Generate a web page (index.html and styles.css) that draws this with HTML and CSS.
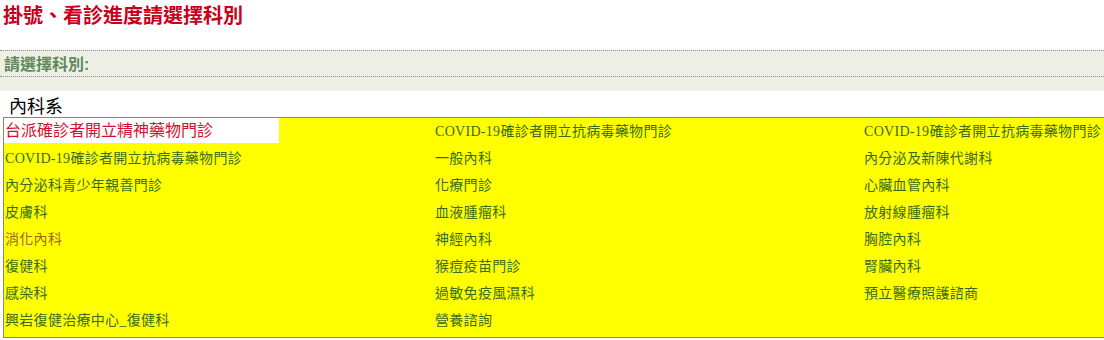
FILE: index.html
```html
<!DOCTYPE html>
<html lang="zh-Hant">
<head>
<meta charset="utf-8">
<title>掛號、看診進度請選擇科別</title>
<link rel="stylesheet" href="styles.css">
</head>
<body>
<h1 class="title">掛號、看診進度請選擇科別</h1>
<div class="band">
  <div class="band-label">請選擇科別:</div>
  <div class="band-rule"></div>
</div>
<div class="group">內科系</div>
<div class="dept-table">
  <div class="cell selected">台派確診者開立精神藥物門診</div>
  <div class="cell"><span class="latin">COVID-19</span>確診者開立抗病毒藥物門診</div>
  <div class="cell"><span class="latin">COVID-19</span>確診者開立抗病毒藥物門診</div>
  <div class="cell"><span class="latin">COVID-19</span>確診者開立抗病毒藥物門診</div>
  <div class="cell">一般內科</div>
  <div class="cell">內分泌及新陳代謝科</div>
  <div class="cell">內分泌科青少年親善門診</div>
  <div class="cell">化療門診</div>
  <div class="cell">心臟血管內科</div>
  <div class="cell">皮膚科</div>
  <div class="cell">血液腫瘤科</div>
  <div class="cell">放射線腫瘤科</div>
  <div class="cell visited">消化內科</div>
  <div class="cell">神經內科</div>
  <div class="cell">胸腔內科</div>
  <div class="cell">復健科</div>
  <div class="cell">猴痘疫苗門診</div>
  <div class="cell">腎臟內科</div>
  <div class="cell">感染科</div>
  <div class="cell">過敏免疫風濕科</div>
  <div class="cell">預立醫療照護諮商</div>
  <div class="cell">興岩復健治療中心_復健科</div>
  <div class="cell">營養諮詢</div>
  <div class="cell"></div>
</div>
</body>
</html>
```
FILE: styles.css
```css
html, body {
  margin: 0;
  padding: 0;
  background: #ffffff;
}
body {
  font-family: "Liberation Sans", "Noto Sans CJK TC", sans-serif;
  width: 1104px;
  overflow: hidden;
}
.title {
  margin: 0;
  padding: 5px 0 0 3px;
  height: 50px;
  box-sizing: border-box;
  font-size: 20px;
  line-height: 22px;
  font-weight: bold;
  color: #c8001a;
}
.band {
  background: #eef0e6;
  border-top: 1px dotted #8a8a8a;
  height: 41px;
  box-sizing: border-box;
}
.band-label {
  padding: 4px 0 0 4px;
  height: 24px;
  box-sizing: border-box;
  font-size: 16px;
  line-height: 19px;
  font-weight: bold;
  color: #5f8a5a;
}
.band-rule {
  border-top: 1px dotted #8a8a8a;
  margin-top: 1px;
}
.group {
  padding: 5px 0 0 9px;
  height: 26px;
  box-sizing: border-box;
  font-size: 18px;
  line-height: 22px;
  color: #000000;
}
.dept-table {
  margin-left: 3px;
  width: 1101px;
  box-sizing: border-box;
  border: 1px solid #8a8a5a;
  border-right: none;
  background: #ffff00;
  display: grid;
  grid-template-columns: 430px 429px 1fr;
  grid-auto-rows: 27px;
  padding-bottom: 3px;
}
.cell {
  padding-left: 1px;
  font-family: "Liberation Serif", "Noto Sans CJK TC", serif;
  font-size: 14px;
  line-height: 28px;
  color: #3a6b1c;
  white-space: nowrap;
  letter-spacing: 0.3px;
}
.cell.selected {
  background: #ffffff;
  color: #d0102e;
  font-family: "Liberation Sans", "Noto Sans CJK TC", sans-serif;
  font-size: 16px;
  line-height: 26px;
  height: 25px;
  width: 274px;
  letter-spacing: 0;
}
.cell.visited {
  color: #a0661a;
}
.latin {
  font-family: "Liberation Serif", serif;
  font-size: 14px;
  letter-spacing: 0.3px;
}
```
